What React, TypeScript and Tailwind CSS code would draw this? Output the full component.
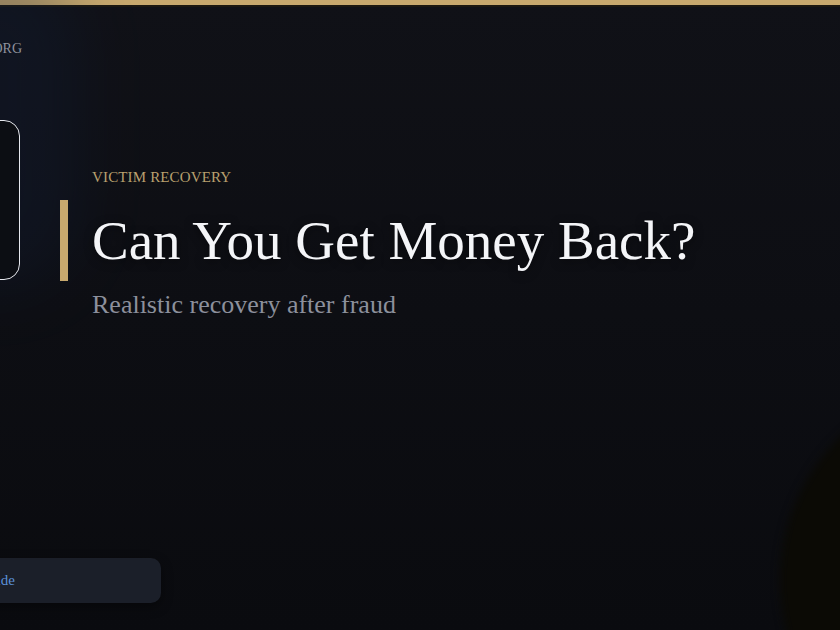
import React from "react";

const serif = { fontFamily: '"Liberation Serif", Georgia, "DejaVu Serif", serif' };

export default function App() {
  return (
    <div
      className="relative w-[840px] h-[630px] overflow-hidden bg-gradient-to-b from-[#101117] to-[#0a0b0f]"
      style={serif}
    >
      {/* top accent strip */}
      <div className="h-[5px] bg-[#c8a96e]" />
      <div className="h-[2px] bg-[#1c1811]" />

      {/* soft glows */}
      <div className="pointer-events-none absolute left-[-90px] top-[-40px] w-[170px] h-[330px] rounded-full bg-[#13203a] opacity-30 blur-[30px]" />
      <div className="pointer-events-none absolute left-[780px] top-[380px] w-[400px] h-[400px] rounded-full bg-[#0b0a05] blur-[4px]" />

      {/* slide content */}
      <main className="relative pl-[60px] pt-[160px]">
        <p className="pl-[32px] text-[15px] leading-[20px] tracking-[0.01em] text-[#b9a06f]">
          VICTIM RECOVERY
        </p>
        <div className="mt-[13px] flex h-[81px] items-center border-l-[8px] border-[#c8a96e] pl-[24px]">
          <h1 className="text-[55px] leading-none text-[#f4f5f8] whitespace-nowrap [text-shadow:0_2px_10px_rgba(0,0,0,0.5)]">
            Can You Get Money Back?
          </h1>
        </div>
        <p className="mt-[7px] pl-[32px] text-[26px] leading-[34px] text-[#8c909c]">
          Realistic recovery after fraud
        </p>
      </main>

      {/* navigation panel, slid out past the left edge */}
      <aside className="absolute left-[-180px] top-0 flex h-full w-[341px] flex-col items-start pt-[40px] pb-[27px]">
        <div className="w-[202px] whitespace-nowrap text-right text-[14px] leading-[18px] text-[#8e929c]">
          FRAUDHELP.ORG
        </div>
        <div className="mt-[62px] h-[160px] w-[200px] rounded-[16px] border border-[#e6e8ee] bg-[#0c0e13]" />
        <div className="flex-1" />
        <div className="flex h-[45px] w-full items-center rounded-[10px] bg-[#1b1f29] shadow-[0_4px_12px_rgba(0,0,0,0.4)]">
          <div className="w-[195px] whitespace-nowrap text-right text-[15px] text-[#5a8fd8]">
            Read the Full Guide
          </div>
        </div>
      </aside>
    </div>
  );
}
